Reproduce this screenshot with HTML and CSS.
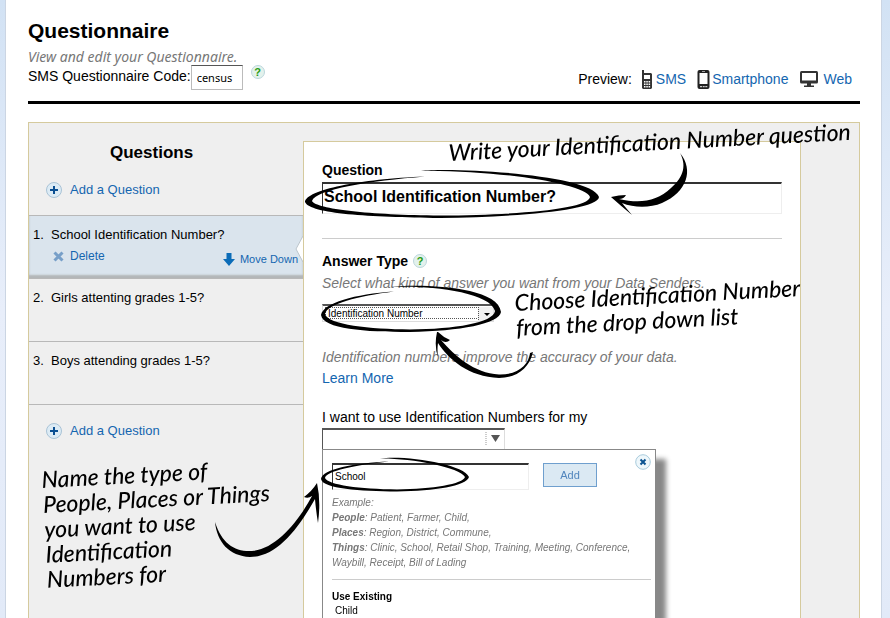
FILE: index.html
```html
<!DOCTYPE html>
<html lang="en">
<head>
<meta charset="utf-8">
<title>Questionnaire</title>
<link rel="stylesheet" href="styles.css">
</head>
<body>
<main class="page">
  <header class="header">
    <div class="intro">
      <h1>Questionnaire</h1>
      <p class="tagline">View and edit your Questionnaire.</p>
      <div class="code-row">
        <label for="code">SMS Questionnaire Code:</label>
        <input class="code" id="code" type="text" value="census">
        <button class="help" type="button" aria-label="Help">?</button>
      </div>
    </div>
    <nav class="preview">
      <span>Preview:</span>
      <a class="sms" href="#"><svg width="12" height="19" viewBox="0 0 12 19"><path d="M1 0h2v3h7l1 1v14l-1 1H2l-1-1z" fill="#333"/><path d="M3 5h6v4H3z" fill="#fff"/><path d="M3 11h1.500v1.500H3zM5.300 11h1.500v1.500H5.300zM7.600 11h1.500v1.500H7.600zM3 13.500h1.500V15H3zM5.300 13.500h1.500V15H5.300zM7.600 13.500h1.500V15H7.600zM3 16h1.500v1.500H3zM5.300 16h1.500v1.500H5.300zM7.600 16h1.500v1.500H7.600z" fill="#fff"/></svg>SMS</a>
      <a class="phone" href="#"><svg width="13" height="19" viewBox="0 0 13 19"><rect x=".5" width="12" height="19" rx="2" fill="#222"/><path d="M2.500 3h8v11h-8z" fill="#fff"/><path d="M5 1.200h3v.8H5zM3 16h2v1.200H3zM5.700 16h2v1.200h-2zM8.300 16h2v1.200h-2z" fill="#ccc"/></svg>Smartphone</a>
      <a class="web" href="#"><svg width="18" height="17" viewBox="0 0 18 17"><rect width="18" height="12.500" rx="1.500" fill="#333"/><path d="M2 2h14v7.500H2z" fill="#fff"/><path d="M7 12h4v2.500h3V16H4v-1.500h3z" fill="#333"/></svg>Web</a>
    </nav>
  </header>

  <div class="panel">
    <section class="questions">
      <h2>Questions</h2>
      <a class="add" href="#"><svg width="18" height="18" viewBox="0 0 18 18"><circle cx="9" cy="9" r="7.500" fill="#dcebf5" stroke="#a9c3d6"/><path d="M5 9h8M9 5v8" stroke="#0b4f92" stroke-width="2"/></svg>Add a Question</a>
      <ol class="list">
        <li class="item current">
          <div class="title"><span class="num">1.</span>School Identification Number?</div>
          <div class="actions">
            <a class="delete" href="#"><svg width="11" height="11" viewBox="0 0 11 11"><path d="M1.500 1.500l8 8M9.500 1.500l-8 8" stroke="#779fc8" stroke-width="3"/></svg>Delete</a>
            <a class="move" href="#"><svg width="12" height="13" viewBox="0 0 12 13"><path d="M3.500 0h5v6H12l-6 7-6-7h3.500z" fill="#0b6cb8"/></svg>Move Down</a>
          </div>
          <svg class="notch" width="8" height="26" viewBox="0 0 8 26"><path d="M8 0L1 13l7 13z" fill="#fff"/><path d="M8 0L1 13l7 13" fill="none" stroke="#bcc5cc"/></svg>
        </li>
        <li class="item"><div class="title"><span class="num">2.</span>Girls attenting grades 1-5?</div></li>
        <li class="item"><div class="title"><span class="num">3.</span>Boys attending grades 1-5?</div></li>
      </ol>
      <a class="add" href="#"><svg width="18" height="18" viewBox="0 0 18 18"><circle cx="9" cy="9" r="7.500" fill="#dcebf5" stroke="#a9c3d6"/><path d="M5 9h8M9 5v8" stroke="#0b4f92" stroke-width="2"/></svg>Add a Question</a>
    </section>

    <form class="editor">
      <label class="label" for="question">Question</label>
      <input class="question" id="question" type="text" value="School Identification Number?">
      <hr>
      <div class="label answer-label"><label for="answer">Answer Type</label><button class="help" type="button" aria-label="About answer types">?</button></div>
      <p class="hint">Select what kind of answer you want from your Data Senders.</p>
      <div class="answer-wrap">
        <select class="answer" id="answer"><option>Identification Number</option></select>
        <svg class="answer-arrow" width="15" height="14" viewBox="0 0 15 14"><path d="M0 0h15v14H0z" fill="#f1f1f1"/><path d="M.5 0v14" stroke="#555" stroke-dasharray="1 1"/><path d="M6 6h6l-3 3z" fill="#000"/></svg>
      </div>
      <p class="hint">Identification numbers improve the accuracy of your data.</p>
      <a class="learn" href="#">Learn More</a>
      <label class="for-label" for="kind">I want to use Identification Numbers for my</label>
      <div class="kind-wrap">
        <select class="kind" id="kind"><option></option></select>
        <svg class="kind-arrow" width="18" height="14" viewBox="0 0 18 14"><path d="M1 0v14" stroke="#999" stroke-dasharray="1 1"/><path d="M6 3h9l-4.500 7z" fill="#555"/></svg>
      </div>
      <div class="popup">
        <button class="close" type="button" aria-label="Close"><svg width="16" height="16" viewBox="0 0 16 16"><circle cx="8" cy="8" r="7.300" fill="#eef7fb" stroke="#a9cbdc"/><path d="M5.500 5.500l5 5M10.500 5.500l-5 5" stroke="#0b5391" stroke-width="2"/></svg></button>
        <div class="entry">
          <input class="name" type="text" value="School" aria-label="Name" autofocus>
          <button class="add-button" type="button">Add</button>
        </div>
        <div class="examples">
          <p>Example:</p>
          <p><b>People</b>: Patient, Farmer, Child,</p>
          <p><b>Places</b>: Region, District, Commune,</p>
          <p><b>Things</b>: Clinic, School, Retail Shop, Training, Meeting, Conference, Waybill, Receipt, Bill of Lading</p>
        </div>
        <hr>
        <h3>Use Existing</h3>
        <div class="existing">Child</div>
      </div>
    </form>
  </div>
</main>

<div class="notes">
  <svg class="ink" width="890" height="618" viewBox="0 0 890 618">
    <path d="M421 171C450 167 592 174 599 197C598 210 520 217 440 218C370 217 310 214 305 202C306 190 360 179 425 176.500C370 181 316 189 312 201C316 209 370 215 440 215.500C520 215 588 209 590 197C585 184 500 170 421 171Z"/>
    <path d="M391 287C415 284 498 285 501 312C499 324 460 331 410 332C365 332 323 329 321 315C323 303 355 294 394 291.500C358 296 327 304 325 314C328 325 370 329 410 329.500C455 329 493 323 495 311C490 291 425 285 391 287Z"/>
    <path d="M380 458.500C405 455 464 464 469 477C466 486 435 491 397 491.500C360 491 323 489 321 479C322 469 355 463 389 461.500C355 465 326 471 325 478C328 485 360 489 397 489.500C433 489 463 484 465 477C460 467 410 458 380 458.500Z"/>
    <path d="M680 153C694 170 687 192 662 203C650 208 634 208 622 203Q626 208 632 215Q621 206 611 197Q619 195 626 195Q624 199 619 199C641 204 657 201 671 188C685 176 686 164 680 153Z"/>
    <path d="M438 332Q443 337 450 340Q446 344 441 340C455 356 474 373 499 374.500C517 375 529 365 530 353L533 352C529 369 516 378 499 378C469 377 448 359 438 343Q437 350 438 357Q434 346 437 332Z"/>
    <path d="M215 522C222 544 235 552 252 551C276 549 298 522 312 496Q308 499 304 497Q312 491 317 483Q321 501 318 523Q316 511 315 499C297 531 276 557 250 557C229 556 217 542 215 522Z"/>
  </svg>
  <p class="note note-question">Write your Identification Number question</p>
  <p class="note note-answer">Choose Identification Number<br>from the drop down list</p>
  <p class="note note-name">Name the type of<br>People, Places or Things<br>you want to use<br>Identification<br>Numbers for</p>
</div>
</body>
</html>
```
FILE: styles.css
```css
* { box-sizing: border-box; }

body {
  margin: 0;
  position: relative;
  height: 100vh;
  overflow: hidden;
  background: linear-gradient(#d2e2f4, #e8eefa 50%, #e2eaf8);
  color: #000;
  font: 14px/16px "Liberation Sans", Arial, sans-serif;
}

h1, h2, h3, p, ol { margin: 0; padding: 0; }
input, select, button { font: inherit; color: inherit; margin: 0; border-radius: 0; }
a { color: #1466b0; text-decoration: none; }
svg { display: block; flex: none; }
hr { border: 0; height: 1px; background: #ccc; }

.page {
  display: flex;
  flex-direction: column;
  min-height: 100vh;
  margin: 0 8px 0 5px;
  padding: 18px 21px 0 22px;
  background: #fff;
  border: solid #cbd5e3;
  border-width: 0 1px;
}

/* Header */
.header {
  display: flex;
  justify-content: space-between;
  align-items: flex-end;
  height: 86px;
  border-bottom: 3px solid #000;
}
.intro { align-self: flex-start; }
h1 { font-size: 21px; line-height: 26px; }
.tagline {
  margin-top: 5px;
  color: #777;
  font: italic 14px/16px "Noto Sans", sans-serif;
}
.code-row { display: flex; align-items: flex-start; line-height: 22px; }
.code {
  width: 52px;
  height: 25px;
  padding: 0 5px;
  border: 1px solid #bbb;
  border-top-color: #555;
  font: 11px "Noto Sans", sans-serif;
}
.help {
  width: 14px;
  height: 14px;
  margin-left: 8px;
  padding: 0;
  border: 1px solid #bcd6dc;
  border-radius: 50%;
  background: #e3f2ec;
  color: #279b12;
  font: bold 11px/12px "Liberation Sans", sans-serif;
}

.preview { display: flex; align-items: center; padding: 0 8px 12px 0; line-height: 20px; }
.preview a { display: flex; align-items: center; }
.sms { margin-left: 9px; gap: 3px; }
.phone { margin-left: 11px; gap: 2px; }
.web { margin-left: 12px; gap: 5px; }

/* Two columns */
.panel {
  display: flex;
  flex: 1;
  margin-top: 18px;
  padding-right: 58px;
  background: #efefef;
  border: 1px solid #d5ca9d;
  border-bottom: 0;
}
.questions { width: 274px; padding-top: 19px; }
h2 { padding-left: 81px; font-size: 17px; line-height: 22px; }
.add { display: flex; align-items: center; gap: 7px; padding-left: 16px; font-size: 13px; line-height: 51px; }
.list { list-style: none; border-bottom: 1px solid #b8b8b8; }
.item {
  position: relative;
  height: 63px;
  padding: 11px 5px 0 4px;
  border-top: 1px solid #b8b8b8;
  font-size: 13px;
}
.current { background: #dae4ed; box-shadow: inset 0 -3px 2px #b3b6b8; }
.title { display: flex; line-height: 16px; }
.num { width: 18px; }
.actions { display: flex; align-items: flex-start; justify-content: space-between; padding-left: 20px; margin-top: 5px; font-size: 12px; }
.actions a { display: flex; align-items: center; }
.delete { gap: 6px; }
.move { gap: 5px; font-size: 11px; margin-top: 3px; }
.notch { position: absolute; right: 0; top: 20px; }

/* Editor */
.editor {
  flex: 1;
  margin-top: 18px;
  padding: 20px 18px 0;
  background: #fff;
  border: 1px solid #d5ca9d;
  border-bottom: 0;
}
.label { display: block; font-weight: bold; }
.question {
  display: block;
  width: 100%;
  height: 32px;
  margin: 4px 0 24px;
  padding: 0 1px 3px;
  border: 1px solid #eee;
  border-top: 2px solid #333;
  border-left-color: #333;
  font-size: 16px;
  font-weight: bold;
}
.editor > hr { margin: 0 0 14px; }
.answer-label { display: flex; align-items: center; }
.answer-label .help { margin-left: 5px; }
.hint { margin-top: 6px; color: #777; font-style: italic; }
.answer-wrap { position: relative; width: 172px; margin: 13px 0 27px; }
.answer {
  display: block;
  appearance: none;
  width: 100%;
  height: 18px;
  padding: 0 5px;
  border: 1px solid #ddd;
  border-top: 2px solid #555;
  background: #fff;
  font-size: 10px;
  outline: 1px dotted #555;
  outline-offset: -4px;
}
.answer-arrow { position: absolute; right: 1px; top: 3px; }
.learn { display: block; margin-top: 4px; line-height: 18px; }
.for-label { display: block; margin-top: 21px; line-height: 18px; }
.kind-wrap { position: relative; width: 183px; margin-top: 2px; }
.kind {
  display: block;
  appearance: none;
  width: 100%;
  height: 21px;
  background: #fff;
  border: 1px solid #ddd;
  border-top: 2px solid #555;
  border-left-color: #555;
  border-bottom: 0;
}
.kind-arrow { position: absolute; right: 2px; top: 4px; }

.popup {
  position: relative;
  width: 334px;
  height: 190px;
  padding: 13px 4px 0 9px;
  background: #fff;
  border: 1px solid #888;
  box-shadow: 10px 10px 5px #888;
}
.close { position: absolute; right: 4px; top: 4px; padding: 0; border: 0; background: none; }
.entry { display: flex; gap: 14px; font-size: 10px; }
.name {
  width: 197px;
  height: 27px;
  padding: 0 2px 2px;
  border: 1px solid #eee;
  border-top: 2px solid #333;
  border-left-color: #333;
  outline: 0;
}
.add-button {
  width: 54px;
  height: 24px;
  padding: 0;
  border: 1px solid #6f9fce;
  background: #dbe9f3;
  color: #5286bd;
  font-size: 11px;
}
.examples { margin-top: 5px; color: #777; font-style: italic; font-size: 10px; line-height: 15px; }
.popup hr { margin: 9px 0; }
h3 { font-size: 10px; line-height: 15px; }
.existing { padding-left: 3px; font-size: 10px; line-height: 14px; }

/* Handwritten notes laid over the page */
.notes { position: absolute; top: 0; left: 0; pointer-events: none; }
.note {
  position: absolute;
  white-space: nowrap;
  transform: rotate(-3deg);
  transform-origin: 0 0;
  font: italic 500 23px/25px Lato, sans-serif;
}
.note-question { left: 448px; top: 140px; }
.note-answer { left: 514px; top: 290px; }
.note-name { left: 41px; top: 467px; }
```
